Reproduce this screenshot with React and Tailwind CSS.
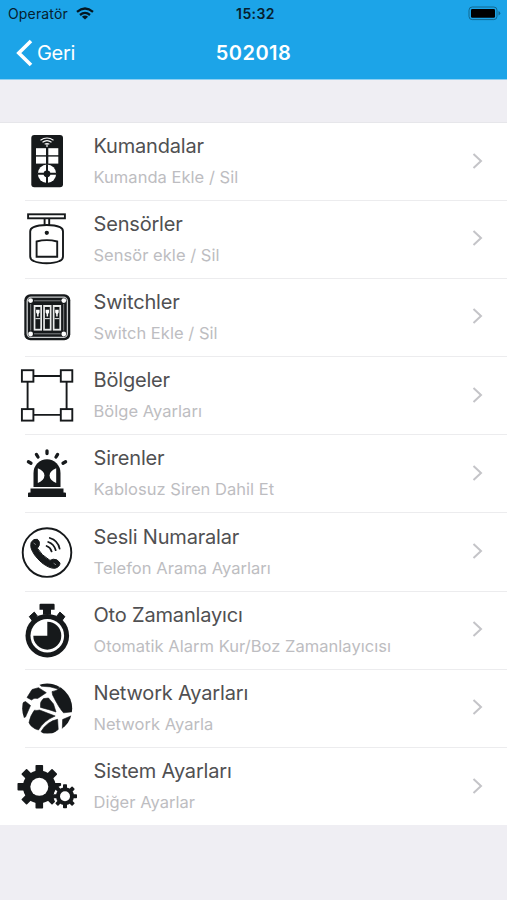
const INK = '#16191b';

function RemoteIcon() {
  return (
    <>
      <rect x="16.3" y="5" width="31.7" height="52.3" rx="3" fill={INK} />
      <g fill="none" stroke="#fff" strokeWidth="1.1">
        <path d="M25.5 10.2Q32 5.8 38.5 10.2" />
        <path d="M27.5 12.3Q32 9 36.5 12.3" />
        <path d="M29.7 14.3Q32 12.6 34.3 14.3M32 13v4" />
      </g>
      <g fill="#fff">
        <rect x="21" y="18.2" width="10" height="7" />
        <rect x="33.3" y="18.2" width="10" height="7" />
        <rect x="21" y="26.6" width="10" height="7" />
        <rect x="33.3" y="26.6" width="10" height="7" />
        <circle cx="32" cy="43.8" r="9.2" />
      </g>
      <circle cx="32" cy="43.8" r="3.4" fill={INK} />
      <path d="M32 34.3v19M22.500 43.8h19" stroke={INK} strokeWidth="2" />
    </>
  );
}

function SensorIcon() {
  return (
    <g fill="none" stroke={INK} strokeWidth="1.9">
      <rect x="13.1" y="6.3" width="36.8" height="4" />
      <path d="M29.6 10.5v6.5M34.2 10.5v6.5" />
      <path d="M15.2 23.500Q15.2 20.6 18.5 19.2C25 16.2 38.5 16.2 45 19.2Q48 20.6 48 23.5V48.5Q48 51.8 44.5 53C38 56 25 56 18.7 53Q15.2 51.8 15.2 48.5Z" />
      <circle cx="31.8" cy="24.8" r="1.2" fill={INK} />
      <path d="M21.6 33.5Q31.8 30.8 42.2 33.5V48.8H21.6Z" />
    </g>
  );
}

function SwitchIcon() {
  return (
    <>
      <rect x="9.3" y="8.3" width="46" height="46" rx="6" fill={INK} />
      <rect x="12.2" y="11.2" width="40.2" height="40.2" rx="4" fill="none" stroke="#c9cccd" strokeWidth="1.3" />
      <g fill="#fff">
        <circle cx="15.6" cy="14.6" r="2.4" />
        <circle cx="48.8" cy="14.6" r="2.4" />
        <circle cx="15.6" cy="48" r="2.4" />
        <circle cx="48.8" cy="48" r="2.4" />
      </g>
      <path d="M19 14.8h26.6M19 47.8h26.6M15.7 18v26.5M48.7 18v26.5" stroke="#8c9091" strokeWidth="0.9" />
      {[18.7, 28.2, 37.8].map((x) => (
        <g key={x}>
          <rect x={x} y="19" width="8.3" height="25.6" fill="#e9eaea" />
          <rect x={x + 1.7} y="21" width="4.9" height="21.8" fill={INK} />
          <path d={`M${x + 2.4} 23.7h3.5v2.8l-1 1.5v2.6h-1.5v-2.6l-1-1.5z`} fill="#fff" />
          <path d={`M${x + 1.7} 32.6h4.9`} stroke="#d5d7d7" strokeWidth="1.1" />
        </g>
      ))}
    </>
  );
}

function ZoneIcon() {
  return (
    <g fill="none" stroke={INK} strokeWidth="1.9">
      <path d="M18.5 12h27M18.5 50.9h27M12.6 17.8v27.3M51.6 17.8v27.3" />
      <rect x="6.9" y="6.2" width="11.5" height="11.5" />
      <rect x="45.8" y="6.2" width="11.5" height="11.5" />
      <rect x="6.9" y="45.1" width="11.5" height="11.5" />
      <rect x="45.8" y="45.1" width="11.5" height="11.5" />
    </g>
  );
}

function SirenIcon() {
  return (
    <>
      <path
        d="M32 8.8v2.8M21.4 12.4l1.6 2.6M42.6 12.4l-1.6 2.6M13.4 19.8l2.6 1.500M50.6 19.8l-2.6 1.500"
        stroke={INK} strokeWidth="3.3" strokeLinecap="round"
      />
      <path d="M18.500 45V31a13.500 13.800 0 0 1 27 0V45Z" fill={INK} />
      <path d="M22.8 26.3Q29.4 29 29.4 33.6T22.8 41Z" fill="#fff" />
      <path d="M41.2 26.3Q34.6 29 34.6 33.6T41.2 41Z" fill="#fff" />
      <path d="M15.500 46.500h33v4h1.500q1 0 1 1V55H13v-3.500q0-1 1-1h1.500z" fill={INK} />
    </>
  );
}

function PhoneIcon() {
  return (
    <>
      <circle cx="32" cy="31.6" r="24.3" fill="none" stroke={INK} strokeWidth="1.9" />
      <path
        d="M16.2 21.2Q18.6 17.4 22.4 18.300Q25.300 20.400 24.200 24.400L22.400 27.200Q26 34 35 39.400L38.200 38.200Q42.600 37.800 45 42Q45 46 39.800 47.300Q34.200 47.600 26.600 41.600Q18 33.800 16 26.800Q15.500 23.200 16.200 21.200Z"
        fill={INK} stroke={INK} strokeWidth="1" strokeLinejoin="round"
      />
      <path d="M18.600 22l2.200 1.600M38.600 42.200l2.400 1.600" stroke="#9a9d9e" strokeWidth="0.8" />
      <g fill="none" stroke={INK} strokeWidth="1.8" strokeLinecap="round">
        <path d="M34.8 17Q42.8 19.3 44.6 27.6" />
        <path d="M33.2 21Q39 23 40.7 29.2" />
        <path d="M31.6 25Q35.5 26.3 36.6 30.4" />
      </g>
    </>
  );
}

function TimerIcon() {
  return (
    <>
      <path d="M25.6 4.700h13q1 0 1 1v5h-3.600v5h-8v-5h-3.500v-5q0-1 1.100-1z" fill={INK} />
      <path d="M14.300 17.600l5-4.500 3 4-5 4.600zM49.900 17.600l-5-4.500-3 4 5 4.600z" fill={INK} stroke={INK} strokeWidth="1" strokeLinejoin="round" />
      <circle cx="32.300" cy="36.700" r="21.800" fill={INK} />
      <circle cx="32.300" cy="36.700" r="16.800" fill="#fff" />
      <path d="M32.300 36.700V22.700A14 14 0 1 1 18.300 36.700Z" fill={INK} />
    </>
  );
}

function NetworkIcon() {
  return (
    <>
      <clipPath id="globe">
        <circle cx="32.200" cy="31.600" r="25" />
      </clipPath>
      <g clipPath="url(#globe)" fill={INK} stroke={INK} strokeWidth="0.600" strokeLinejoin="round">
        <path d="M21.500 5Q33 4 45 9L43 12Q35 9 26.500 9.300Z" />
        <path d="M17 12.500L23.500 10.700L31.300 15.700L22.600 21.500Q19 20.300 16.500 23L12 20.500Z" />
        <path d="M5 27L10.500 24.500L15.500 28.500L10.500 40L5 42Z" />
        <path d="M37 14.600Q41 14.500 45.500 10L52 10L60 34.500L48.500 35.800Q44 31 37.600 18Z" />
        <path d="M25.500 26.400Q25.500 24.800 28.500 21.600L33.500 21L38.500 27L41 35Q34 32.500 25.500 30.400Z" />
        <path d="M19.400 33.200Q22 33.800 24.500 33L40.200 39Q29 43.500 23.500 53L20 51.800Q15 49 14 45.600Q15 39 19.400 33.200Z" />
        <path d="M26 54.500Q32 44.500 42.600 42.300L43.200 52.500L33 60Z" />
        <path d="M47.600 42.500L57 38.500L57 50L47.300 52Z" />
      </g>
    </>
  );
}

function Gear({ cx, cy, body, outer, hole, tooth }) {
  return (
    <g transform={`translate(${cx} ${cy})`} fill={INK}>
      {[0, 45, 90, 135].map((a) => (
        <rect key={a} x={-tooth / 2} y={-outer} width={tooth} height={outer * 2} rx="0.8" transform={`rotate(${a})`} />
      ))}
      <circle r={body} />
      <circle r={hole} fill="#fff" />
    </g>
  );
}

function SettingsIcon() {
  return (
    <>
      <Gear cx={24.3} cy={31.8} body={16.4} outer={21.8} hole={9} tooth={7.6} />
      <circle cx="50" cy="41.200" r="11.300" fill="#fff" />
      <Gear cx={50} cy={41.2} body={9} outer={12} hole={5} tooth={4} />
    </>
  );
}

const items = [
  { title: 'Kumandalar', detail: 'Kumanda Ekle / Sil', Icon: RemoteIcon },
  { title: 'Sensörler', detail: 'Sensör ekle / Sil', Icon: SensorIcon },
  { title: 'Switchler', detail: 'Switch Ekle / Sil', Icon: SwitchIcon },
  { title: 'Bölgeler', detail: 'Bölge Ayarları', Icon: ZoneIcon },
  { title: 'Sirenler', detail: 'Kablosuz Siren Dahil Et', Icon: SirenIcon },
  { title: 'Sesli Numaralar', detail: 'Telefon Arama Ayarları', Icon: PhoneIcon },
  { title: 'Oto Zamanlayıcı', detail: 'Otomatik Alarm Kur/Boz Zamanlayıcısı', Icon: TimerIcon },
  { title: 'Network Ayarları', detail: 'Network Ayarla', Icon: NetworkIcon },
  { title: 'Sistem Ayarları', detail: 'Diğer Ayarlar', Icon: SettingsIcon },
];

function StatusBar() {
  return (
    <div className="grid h-[27px] grid-cols-3 items-center pl-2 pr-[6px] text-[#06202e]">
      <div className="flex items-center gap-2">
        <span className="text-[14px] tracking-[0.15px]">Operatör</span>
        <svg width="18" height="13" viewBox="0 0 18 13" fill="none" stroke="#041721" strokeWidth="2.300">
          <path d="M1 4.900Q9-1.900 17 4.900" />
          <path d="M4 8Q9 3.800 14 8" />
          <path d="M9 12.600L5.900 9.800Q9 7.300 12.100 9.800Z" fill="#041721" stroke="none" />
        </svg>
      </div>
      <span className="pl-[2px] text-center text-[14px] font-semibold tracking-[0.4px]">15:32</span>
      <svg className="justify-self-end" width="33" height="15" viewBox="0 0 33 15">
        <rect x="1" y="1" width="28" height="12.600" rx="3.200" fill="none" stroke="#12688f" />
        <rect x="3" y="3" width="24" height="8.700" rx="1.300" fill="#000" />
        <path d="M30.500 5v4.600q1.800-.8 1.800-2.300T30.500 5z" fill="#12688f" />
      </svg>
    </div>
  );
}

function NavBar() {
  return (
    <div className="grid h-[51px] grid-cols-3 items-center text-white">
      <button className="flex items-center gap-[4px] pl-4 text-left">
        <svg width="17" height="28" viewBox="0 0 17 28" fill="none" stroke="currentColor" strokeWidth="3.600">
          <path d="M15 2L2.800 14L15 26" />
        </svg>
        <span className="text-[20px] tracking-[-0.3px]">Geri</span>
      </button>
      <h1 className="text-center text-[20px] font-semibold tracking-[0.5px]">502018</h1>
    </div>
  );
}

function Row({ title, detail, Icon }) {
  return (
    <li className="group pl-[25px]">
      <div className="flex h-[78.2px] items-center border-t border-[#ececee] pt-px group-first:h-[77.2px] group-first:border-transparent">
        <svg className="-ml-[10px] shrink-0" width="64" height="64" viewBox="0 0 64 64">
          <Icon />
        </svg>
        <div className="ml-[14.5px] flex-1 whitespace-nowrap">
          <p className="text-[20px] leading-[31px] tracking-[-0.18px] text-[#505052]">{title}</p>
          <p className="text-[16.5px] leading-[31px] tracking-[0.03px] text-[#bdbdc1]">{detail}</p>
        </div>
        <svg className="mr-[22px] mb-[3px] shrink-0" width="14" height="18" viewBox="0 0 14 18" fill="none" stroke="#c4c4c8" strokeWidth="2">
          <path d="M2.500 2L10 9L2.500 16" />
        </svg>
      </div>
    </li>
  );
}

export default function App() {
  return (
    <div className="h-[900px] w-[507px] overflow-hidden bg-[#efeef3] font-['Inter',sans-serif]">
      <header className="h-[79.5px] border-b border-[#8fd0f2] bg-[#1ca4e8]">
        <StatusBar />
        <NavBar />
      </header>
      <div className="h-[43px] border-b border-[#e6e6ea]" />
      <ul className="bg-white">
        {items.map((item) => (
          <Row key={item.title} {...item} />
        ))}
      </ul>
    </div>
  );
}
